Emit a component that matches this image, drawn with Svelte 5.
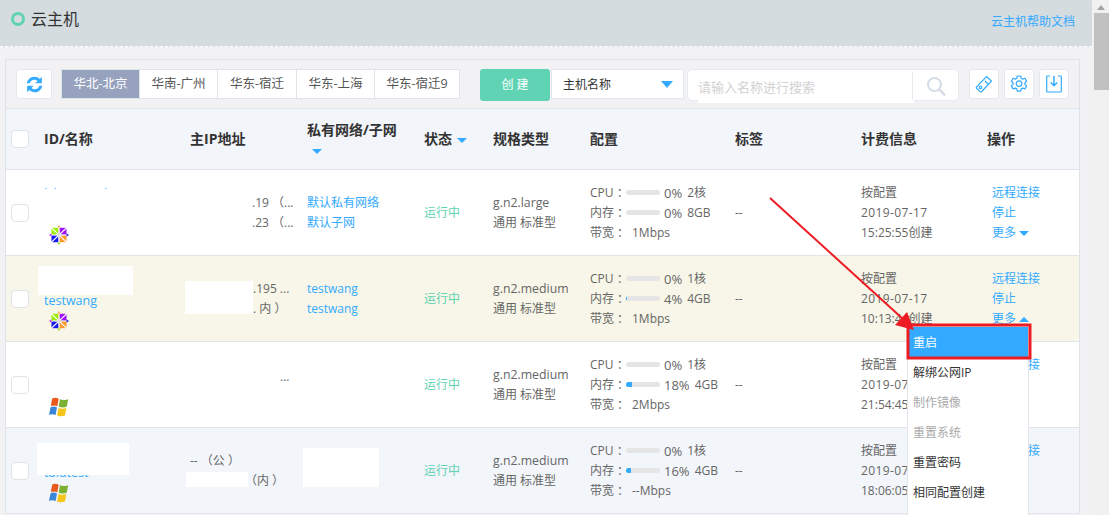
<script>
	const regions = ['华北-北京', '华南-广州', '华东-宿迁', '华东-上海', '华东-宿迁9'];
	const heads = [
		{ label: 'ID/名称' },
		{ label: '主IP地址' },
		{ label: '私有网络/子网', stack: true },
		{ label: '状态', caret: true },
		{ label: '规格类型' },
		{ label: '配置' },
		{ label: '标签' },
		{ label: '计费信息' },
		{ label: '操作' }
	];
	const rows = [
		{
			cls: 'plain', os: 'centos', name: 'l  bnosev-d', clip: true,
			ip: ['.19 （...', '.23 （...'], ipCls: 'ip-a',
			vpc: ['默认私有网络', '默认子网'], type: 'g.n2.large',
			cpu: 0, core: '2核', mem: 0, ram: '8GB', bw: '1Mbps',
			date: '2019-07-17', time: '15:25:55创建', up: false
		},
		{
			cls: 'hover', os: 'centos', name: 'testwang',
			ip: ['.195 ...', '. 内 ）'], ipCls: 'ip-b',
			vpc: ['testwang', 'testwang'], type: 'g.n2.medium',
			cpu: 0, core: '1核', mem: 4, ram: '4GB', bw: '1Mbps',
			date: '2019-07-17', time: '10:13:44创建', up: true
		},
		{
			cls: 'plain', os: 'win', name: '',
			ip: ['...'], ipCls: 'ip-c',
			vpc: [], type: 'g.n2.medium',
			cpu: 0, core: '1核', mem: 18, ram: '4GB', bw: '2Mbps',
			date: '2019-07-17', time: '21:54:45创建', up: false
		},
		{
			cls: 'tint', os: 'win', name: 'tafatest',
			ip: ['-- （公 ）', '（内 ）'], ipCls: 'ip-d',
			vpc: [], type: 'g.n2.medium',
			cpu: 0, core: '1核', mem: 16, ram: '4GB', bw: '--Mbps',
			date: '2019-07-17', time: '18:06:05创建', up: false
		}
	];
	const menu = [
		{ label: '解绑公网IP' },
		{ label: '制作镜像', off: true },
		{ label: '重置系统', off: true },
		{ label: '重置密码' },
		{ label: '相同配置创建' }
	];
</script>

{#snippet centos()}
	<svg class="os" viewBox="0 0 20 20" width="20" height="20">
		<path d="M2.500 2.800h6.800v6.600H2.500z" fill="#99ee00" />
		<path d="M10.700 2.800h6.800v6.600h-6.800z" fill="#a010f8" />
		<path d="M2.500 10.600h6.800v6.600H2.500z" fill="#1818f0" />
		<path d="M10.700 10.600h6.800v6.600h-6.800z" fill="#ff9a2e" />
		<path d="M2 2.400l16 15.200M18 2.400L2 17.600" stroke="#fff" stroke-width="1.300" />
		<path d="M10 0l1.800 2.600H8.200z" fill="#ffb060" />
		<path d="M20 10l-2.500 1.800V8.200z" fill="#2a2ae0" />
		<path d="M10 20l-1.800-2.600h3.600z" fill="#a4e020" />
		<path d="M0 10l2.500-1.800v3.600z" fill="#b040f0" />
		<path d="M10 5.500l1 3.500 3.500 1-3.500 1-1 3.500-1-3.500-3.500-1 3.500-1z" fill="#dedede" />
	</svg>
{/snippet}

{#snippet win()}
	<svg class="os" viewBox="0 0 20 20" width="20" height="20">
		<path d="M3.200 1.500c2.200-1 4.300-.9 6.500.2L8.300 9.300C6.200 8.200 4.100 8.200 1.800 9.100z" fill="#e8591a" />
		<path d="M11 2.300c2.300 1.100 4.500 1.100 8.200-.1l-1.500 7.600c-2.800 1-5 .9-8-.1z" fill="#7cb030" />
		<path d="M1.600 10.200c2.200-.9 4.300-.9 6.400.2l-1.400 7.600c-2.100-1.100-4.300-1.100-6.600-.2z" fill="#3a86d8" />
		<path d="M9.500 11c2.700 1 5 1.100 7.900.1l-1.400 7.400c-2.800 1.100-5 1-7.900-.1z" fill="#f6c51a" />
	</svg>
{/snippet}

<div class="page">
	<div class="main">
		<header class="head">
			<div class="title"><span class="ring"></span>云主机</div>
			<span class="help">云主机帮助文档</span>
		</header>

		<section class="panel">
			<div class="toolbar">
				<button class="refresh" aria-label="刷新">
					<svg viewBox="0 0 20 20" width="19" height="19" fill="#33aaff">
						<path d="M1.800 8.800C2.500 4.800 5.800 1.800 9.900 1.800c2.200 0 4.200.9 5.600 2.300l2.200-2.200v6.800h-6.800l2.300-2.300c-.9-.9-2.100-1.400-3.400-1.400-2.300 0-4.200 1.500-4.800 3.800z" />
						<path d="M18.200 11.200c-.7 4-4 7-8.100 7-2.200 0-4.200-.9-5.600-2.300l-2.200 2.200v-6.800h6.800l-2.300 2.300c.9.900 2.100 1.400 3.400 1.400 2.300 0 4.200-1.500 4.800-3.800z" />
					</svg>
				</button>
				<div class="tabs">
					{#each regions as r, i}
						<span class="tab" class:on={i === 0}>{r}</span>
					{/each}
				</div>
				<button class="create">创 建</button>
				<div class="select">主机名称<i class="caret big"></i></div>
				<div class="search">
					<span class="ph">请输入名称进行搜索</span>
					<span class="go">
						<svg viewBox="0 0 20 20" width="20" height="20" fill="none" stroke="#d5dce6" stroke-width="2">
							<circle cx="8.500" cy="8.500" r="6.500" />
							<path d="M13.300 13.300l5.700 6" stroke-width="2.600" />
						</svg>
					</span>
				</div>
				<div class="tools">
					<button aria-label="标签">
						<svg viewBox="0 0 20 20" width="20" height="20" fill="none" stroke="#33aaff" stroke-width="1.200">
							<path d="M12.500 2.500l5 4.500-9.800 10.500c-.5.500-1 .5-1.500.1l-3.600-3.300c-.5-.5-.5-1 0-1.500z" />
							<circle cx="6.500" cy="13.300" r="1.300" />
							<path d="M11 7l3 2.800" />
						</svg>
					</button>
					<button aria-label="设置">
						<svg viewBox="0 0 20 20" width="20" height="20" fill="none" stroke="#33aaff" stroke-width="1.200">
							<path d="M8.300 2h3.400l.5 2.300 1.500.8 2.200-.8 1.700 3-1.700 1.500v1.600l1.700 1.500-1.700 3-2.200-.8-1.500.8-.5 2.300H8.300l-.5-2.300-1.500-.8-2.200.8-1.700-3 1.700-1.500V8.800L2.400 7.300l1.700-3 2.200.8 1.500-.8z" stroke-linejoin="round" />
							<circle cx="10" cy="9.600" r="2.800" />
						</svg>
					</button>
					<button aria-label="导出">
						<svg viewBox="0 0 20 20" width="20" height="20" fill="none" stroke="#33aaff" stroke-width="1.200">
							<path d="M6 2H3.500C3 2 2.700 2.300 2.700 2.800v14.400c0 .5.300.8.800.8h13c.5 0 .8-.3.800-.8V2.800c0-.5-.3-.8-.8-.8H14" />
							<path d="M10 2v9.500M6.800 8.500l3.200 3.200 3.200-3.200" stroke-width="1.500" />
						</svg>
					</button>
				</div>
			</div>

			<div class="grid thead">
				<div class="cell"><span class="check"></span></div>
				{#each heads as h}
					<div class="cell" class:stack={h.stack}>
						<span>{h.label}</span>
						{#if h.caret || h.stack}<i class="caret"></i>{/if}
					</div>
				{/each}
			</div>

			{#each rows as row, i}
				<div class="grid row {row.cls}">
					<div class="cell"><span class="check"></span></div>
					<div class="cell id">
						<span class="name" class:lifted={row.clip}>{row.name}</span>
						{#if row.os === 'centos'}{@render centos()}{:else}{@render win()}{/if}
					</div>
					<div class="cell lines {row.ipCls}">
						{#each row.ip as line}<div>{line}</div>{/each}
					</div>
					<div class="cell lines link">
						{#each row.vpc as line}<div>{line}</div>{/each}
					</div>
					<div class="cell running">运行中</div>
					<div class="cell lines">
						<div class="latin">{row.type}</div>
						<div>通用 标准型</div>
					</div>
					<div class="cell lines">
						<div class="usage">
							<span class="lab">CPU ：</span>
							<span class="bar"><b style="width:{row.cpu}%"></b></span>
							<span class="pct">{row.cpu}%</span><span>{row.core}</span>
						</div>
						<div class="usage">
							<span class="lab">内存 ：</span>
							<span class="bar"><b style="width:{row.mem}%"></b></span>
							<span class="pct">{row.mem}%</span><span>{row.ram}</span>
						</div>
						<div class="usage">
							<span class="lab bw">带宽 ：</span><span>{row.bw}</span>
						</div>
					</div>
					<div class="cell">--</div>
					<div class="cell lines">
						<div>按配置</div>
						<div class="date">{row.date}</div>
						<div>{row.time}</div>
					</div>
					<div class="cell lines link ops">
						<div>远程连接</div>
						<div>停止</div>
						<div>更多<i class="caret" class:up={row.up}></i></div>
					</div>
					{#if i === 0}
						<span class="mask m-name1"></span>
					{/if}
					{#if i === 1}
						<span class="mask m-name2"></span>
						<span class="mask m-ip2"></span>
					{/if}
					{#if i === 3}
						<span class="mask m-name4"></span>
						<span class="mask m-ip4"></span>
						<span class="mask m-vpc4"></span>
					{/if}
				</div>
			{/each}
		</section>

		<div class="menu">
			<div class="item active">重启</div>
			{#each menu as m}
				<div class="item" class:off={m.off}>{m.label}</div>
			{/each}
		</div>

		<svg class="arrow" viewBox="0 0 1109 515" width="1109" height="515">
			<rect x="908" y="325" width="122" height="33" fill="none" stroke="#ed1c24" stroke-width="3" />
			<path d="M770 198L903 319" stroke="#ed1c24" stroke-width="2" fill="none" />
			<path d="M914 330L895 325 907 312z" fill="#ed1c24" />
		</svg>
	</div>

	<div class="scrollbar">
		<i class="sb-up"></i>
		<i class="thumb"></i>
	</div>
</div>

<style>
	:global(body) {
		margin: 0;
		background: #f2f2f4;
	}
	.page {
		display: flex;
		height: 515px;
		overflow: hidden;
		font: 12px/20px "Open Sans", "Noto Sans CJK SC", sans-serif;
		color: #666;
	}
	.main {
		position: relative;
		width: 1092px;
		flex: none;
	}
	.head {
		height: 46px;
		display: flex;
		justify-content: space-between;
		align-items: center;
		padding: 0 17px 0 11px;
		background: #d5dce0;
		border-bottom: 1px dashed #fff;
	}
	.title {
		display: flex;
		align-items: center;
		gap: 6px;
		font-size: 16px;
		color: #333;
		margin-top: -9px;
	}
	.ring {
		width: 8px;
		height: 8px;
		border: 3px solid #5fd3b3;
		border-radius: 50%;
	}
	.help {
		color: #33aaff;
		margin-top: -3px;
	}
	.panel {
		margin: 12px 0 0 5px;
		width: 1073px;
		border: 1px solid #dde3e8;
		border-bottom: 0;
	}
	.toolbar {
		height: 48px;
		display: flex;
		align-items: center;
		padding-left: 10px;
		border-bottom: 1px solid #dde3e8;
	}
	button {
		font: inherit;
		border: 1px solid #e3e8ee;
		background: #fff;
		border-radius: 3px;
		padding: 0;
		display: flex;
		align-items: center;
		justify-content: center;
		box-sizing: border-box;
	}
	.refresh {
		width: 36px;
		height: 30px;
	}
	.tabs {
		display: flex;
		margin-left: 9px;
		height: 30px;
		border: 1px solid #dde3e8;
		box-sizing: border-box;
		background: #fff;
		color: #555;
	}
	.tab {
		width: 77px;
		line-height: 28px;
		text-align: center;
		border-left: 1px solid #dde3e8;
		font-size: 12.500px;
	}
	.tab:first-child {
		border-left: 0;
	}
	.tab:nth-child(3) {
		width: 78px;
	}
	.tab:last-child {
		width: 84px;
	}
	.tab.on {
		background: #97a2bf;
		color: #fff;
	}
	.create {
		width: 70px;
		height: 32px;
		margin-left: 20px;
		margin-top: 2px;
		background: #5fd3b3;
		border: 0;
		color: #fff;
	}
	.select {
		position: relative;
		width: 133px;
		height: 30px;
		margin-left: 1px;
		padding-left: 11px;
		line-height: 29px;
		box-sizing: border-box;
		background: #fff;
		border: 1px solid #e3e8ee;
		color: #333;
	}
	.select .caret {
		position: absolute;
		right: 10px;
		top: 11px;
		margin: 0;
	}
	.search {
		position: relative;
		width: 272px;
		height: 32px;
		margin: 2px 0 0 3px;
		display: flex;
		background: #fff;
		border: 1px solid #e6ebf0;
		border-radius: 5px;
		box-sizing: border-box;
	}
	.ph {
		flex: 1;
		padding-left: 10px;
		line-height: 34px;
		color: #d2d2d2;
		font-size: 13px;
	}
	.ph::after {
		content: '';
		position: absolute;
		left: 10px;
		top: 28px;
		width: 216px;
		height: 5px;
		background: #fff;
	}
	.go {
		width: 45px;
		border-left: 1px solid #e6ebf0;
		display: flex;
		align-items: center;
		justify-content: center;
		margin-top: 2px;
		position: relative;
	}
	.tools {
		display: flex;
		gap: 5px;
		margin-left: 10px;
	}
	.tools button {
		width: 30px;
		height: 30px;
	}
	.grid {
		display: grid;
		grid-template-columns: 38px 146px 117px 117px 69px 97px 145px 126px 126px 92px;
		align-items: center;
	}
	.thead {
		height: 59px;
		padding-bottom: 1px;
		background: #f2f5fa;
		border-bottom: 1px solid #dde3e8;
		color: #333;
		font-weight: 700;
		font-size: 14px;
	}
	.thead .stack {
		display: flex;
		flex-direction: column;
		align-items: flex-start;
		gap: 9px;
		padding-bottom: 3px;
	}
	.thead .caret {
		margin-left: 1px;
	}
	.thead .stack .caret {
		margin: 0 0 0 5px;
	}
	.row {
		position: relative;
		height: 85px;
		border-bottom: 1px solid #e2e5e8;
		background: #fff;
	}
	.row.hover {
		background: #f7f6e8;
	}
	.row.tint {
		background: #f2f5fa;
	}
	.check {
		display: block;
		width: 16px;
		height: 16px;
		margin-left: 5px;
		border: 1px solid #dde3e8;
		border-radius: 4px;
		background: #fff;
	}
	.id {
		align-self: start;
		padding-top: 35px;
		color: #33aaff;
		height: 50px;
	}
	.name {
		display: block;
		height: 20px;
		font-size: 12.500px;
		white-space: pre;
	}
	.name.lifted {
		margin: -21px 0 21px;
	}
	.os {
		display: block;
		margin-left: 5px;
	}
	.link {
		color: #33aaff;
	}
	.running {
		color: #5fd3b3;
	}
	.latin {
		font-size: 12.300px;
	}
	.date {
		letter-spacing: 0.4px;
	}
	.ip-a {
		padding-left: 62px;
	}
	.ip-b {
		padding-left: 63px;
	}
	.ip-c {
		padding-left: 90px;
		margin-top: -15px;
	}
	.ip-d div:last-child {
		padding-left: 55px;
	}
	.usage {
		display: flex;
		align-items: center;
		white-space: nowrap;
	}
	.lab {
		width: 36px;
		flex: none;
	}
	.lab.bw {
		width: 42px;
	}
	.bar {
		width: 34px;
		height: 5px;
		border-radius: 3px;
		background: #e5e5e5;
		overflow: hidden;
	}
	.bar b {
		display: block;
		height: 100%;
		background: #33aaff;
	}
	.pct {
		margin: 0 5px 0 4px;
		font-size: 13px;
	}
	.ops {
		padding-left: 5px;
		white-space: nowrap;
	}
	.caret {
		display: inline-block;
		width: 0;
		height: 0;
		margin-left: 3px;
		vertical-align: 1px;
		border-left: 5px solid transparent;
		border-right: 5px solid transparent;
		border-top: 5px solid #33aaff;
	}
	.caret.big {
		border-left-width: 6px;
		border-right-width: 6px;
		border-top-width: 7px;
	}
	.caret.up {
		border-top: 0;
		border-bottom: 5px solid #33aaff;
	}
	.mask {
		position: absolute;
		background: #fff;
	}
	.m-name1 {
		left: 32px;
		top: 19px;
		width: 95px;
		height: 30px;
	}
	.m-name2 {
		left: 32px;
		top: 10px;
		width: 95px;
		height: 29px;
	}
	.m-ip2 {
		left: 179px;
		top: 25px;
		width: 68px;
		height: 33px;
	}
	.m-name4 {
		left: 31px;
		top: 15px;
		width: 92px;
		height: 32px;
	}
	.m-ip4 {
		left: 180px;
		top: 44px;
		width: 62px;
		height: 15px;
	}
	.m-vpc4 {
		left: 297px;
		top: 20px;
		width: 76px;
		height: 39px;
	}
	.menu {
		position: absolute;
		left: 908px;
		top: 327px;
		width: 120px;
		height: 188px;
		background: #fff;
		box-shadow: 0 0 0 1px #e2e5e8;
		color: #333;
	}
	.item {
		height: 30px;
		line-height: 32px;
		padding-left: 5px;
	}
	.item.active {
		background: #33aaff;
		color: #fff;
	}
	.item.off {
		color: #aaa;
	}
	.arrow {
		position: absolute;
		left: 0;
		top: 0;
		pointer-events: none;
	}
	.scrollbar {
		position: relative;
		flex: 1;
		background: #f1f1f1;
	}
	.sb-up {
		position: absolute;
		left: 5px;
		top: 5px;
		border-left: 4px solid transparent;
		border-right: 4px solid transparent;
		border-bottom: 5px solid #a3a3a3;
	}
	.thumb {
		position: absolute;
		left: 2px;
		right: 0;
		top: 13px;
		height: 77px;
		background: #c1c1c1;
	}
</style>
